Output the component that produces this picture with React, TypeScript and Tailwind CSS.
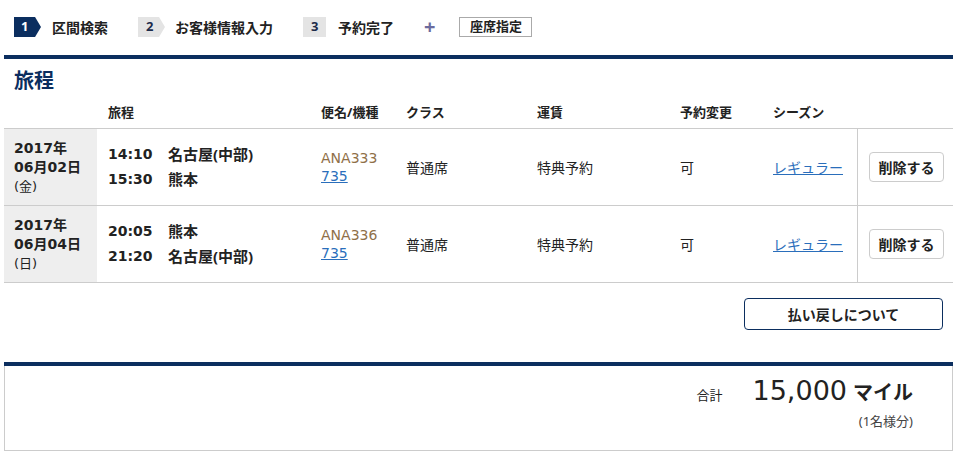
const font = { fontFamily: '"Noto Sans", "Noto Sans CJK JP", sans-serif' };

const rows = [
  {
    year: "2017年",
    date: "06月02日",
    dow: "(金)",
    legs: [
      ["14:10", "名古屋(中部)"],
      ["15:30", "熊本"],
    ],
    flight: "ANA333",
  },
  {
    year: "2017年",
    date: "06月04日",
    dow: "(日)",
    legs: [
      ["20:05", "熊本"],
      ["21:20", "名古屋(中部)"],
    ],
    flight: "ANA336",
  },
];

const cols = "grid grid-cols-[93px_213px_85px_131px_143px_93px_95px_96px]";
// Meiryo-like wide digits
const num = "font-[DejaVu_Sans,Noto_Sans_CJK_JP,sans-serif]";

const Steps = () => (
  <div className="flex h-[20px] items-center pl-[14px] text-[14px] font-bold text-[#222]">
    <div className="flex h-[20px] w-[27px] items-center bg-[#0b2e5f] pl-[7px] text-[13px] text-white [clip-path:polygon(0_0,78%_0,100%_50%,78%_100%,0_100%)]">
      1
    </div>
    <span className="ml-[11px]">区間検索</span>
    <div className="ml-[30px] flex h-[20px] w-[27px] items-center bg-[#e4e4e4] pl-[8px] text-[13px] text-[#1c2b4a] [clip-path:polygon(0_0,78%_0,100%_50%,78%_100%,0_100%)]">
      2
    </div>
    <span className="ml-[10px]">お客様情報入力</span>
    <div className="ml-[30px] flex h-[20px] w-[23px] items-center bg-[#e4e4e4] pl-[8px] text-[13px] text-[#1c2b4a]">
      3
    </div>
    <span className="ml-[12px]">予約完了</span>
    <span className="ml-[30px] text-[20px] font-bold leading-none text-[#6b6b9e]">+</span>
    <div className="ml-[24px] flex h-[20px] w-[73px] items-center justify-center border border-[#aaa] text-[13px]">
      座席指定
    </div>
  </div>
);

export default function App() {
  return (
    <div className="h-[456px] w-[962px] bg-white pt-[17px] text-[#222]" style={font}>
      <Steps />
      <div className="ml-[4px] w-[949px]">
        <div className="mt-[18px] h-[4px] bg-[#0b2e5f]" />
        <h2 className="mt-[8px] pl-[10px] text-[20px] font-bold leading-[28px] text-[#0b2e5f]">旅程</h2>
        <div className={`${cols} h-[33px] items-center pt-[3px] text-[13px] font-bold`}>
          <div />
          <div className="pl-[11px]">旅程</div>
          <div className="pl-[11px]">便名/機種</div>
          <div className="pl-[11px]">クラス</div>
          <div className="pl-[11px]">運賃</div>
          <div className="pl-[11px]">予約変更</div>
          <div className="pl-[11px]">シーズン</div>
          <div />
        </div>
        <div className="border-t border-[#ccc]">
          {rows.map((r) => (
            <div key={r.flight} className={`${cols} h-[77px] border-b border-[#ccc] text-[14px]`}>
              <div className={`flex flex-col justify-center bg-[#eeeeee] pl-[10px] ${num}`}>
                <div className="text-[14px] font-bold leading-[19px]">{r.year}</div>
                <div className="text-[14px] font-bold leading-[19px]">{r.date}</div>
                <div className="text-[13px] leading-[19px]">{r.dow}</div>
              </div>
              <div className="flex flex-col justify-center pl-[11px] text-[15px] font-bold">
                {r.legs.map(([t, p]) => (
                  <div key={t} className="flex leading-[25px]">
                    <span className={`w-[60px] text-[14px] ${num}`}>{t}</span>
                    <span>{p}</span>
                  </div>
                ))}
              </div>
              <div className={`flex flex-col justify-center pl-[11px] leading-[18px] ${num}`}>
                <span className="text-[#8f7048]">{r.flight}</span>
                <a className="w-fit text-[#2a6ebb] underline">735</a>
              </div>
              <div className="flex items-center pl-[11px]">普通席</div>
              <div className="flex items-center pl-[11px]">特典予約</div>
              <div className="flex items-center pl-[11px]">可</div>
              <div className="flex items-center pl-[11px]">
                <a className="text-[#2a6ebb] underline">レギュラー</a>
              </div>
              <div className="flex items-center border-l border-[#ccc] pl-[11px]">
                <button className="h-[30px] w-[75px] rounded-[4px] border border-[#ccc] bg-white font-bold">
                  削除する
                </button>
              </div>
            </div>
          ))}
        </div>
        <div className="mt-[15px] flex justify-end pr-[10px]">
          <button className="h-[32px] w-[199px] rounded-[4px] border border-[#0b2e5f] text-[14px] font-bold">
            払い戻しについて
          </button>
        </div>
        <div className="mt-[32px] h-[4px] bg-[#0b2e5f]" />
        <div className="h-[85px] border-x border-b border-[#ccc] pr-[39px]">
          <div className="flex items-baseline justify-end pt-[7px]">
            <span className="text-[13px]">合計</span>
            <span className={`ml-[30px] text-[27px] leading-[36px] ${num}`}>15,000</span>
            <span className="ml-[6px] text-[20px] font-bold">マイル</span>
          </div>
          <div className="mt-[3px] text-right text-[13px] text-[#444]">(1名様分)</div>
        </div>
      </div>
    </div>
  );
}
